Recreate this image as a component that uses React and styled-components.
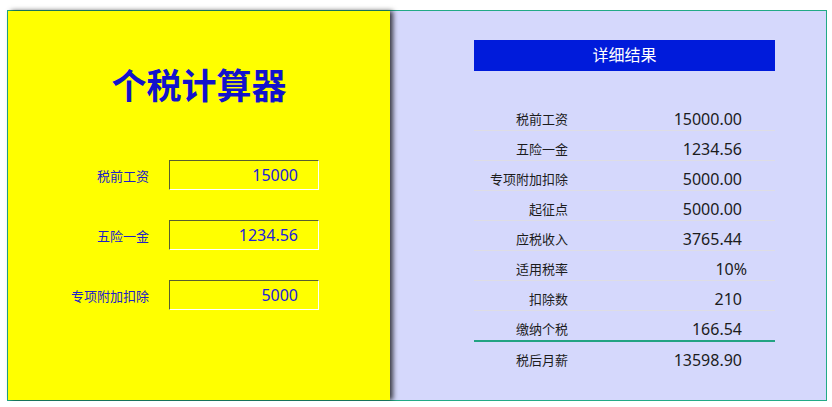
import React, { useState } from 'react'
import styled, { createGlobalStyle } from 'styled-components'

const GlobalStyle = createGlobalStyle`
  body {
    margin: 0;
    font-family: "Noto Sans", "Noto Sans CJK SC", sans-serif;
    background: #fff;
  }
`

// 个税税率表（月度）
const BRACKETS = [
  { max: 3000, rate: 3, quick: 0 },
  { max: 12000, rate: 10, quick: 210 },
  { max: 25000, rate: 20, quick: 1410 },
  { max: 35000, rate: 25, quick: 2660 },
  { max: 55000, rate: 30, quick: 4410 },
  { max: 80000, rate: 35, quick: 7160 },
  { max: Infinity, rate: 45, quick: 15160 }
]
const THRESHOLD = 5000

function calc(salary, insurance, special) {
  const s = parseFloat(salary) || 0
  const i = parseFloat(insurance) || 0
  const d = parseFloat(special) || 0
  const taxable = Math.max(0, s - i - d - THRESHOLD)
  const b = BRACKETS.find((x) => taxable <= x.max)
  const tax = Math.max(0, Math.round((taxable * b.rate / 100 - b.quick) * 100) / 100)
  return { s, i, d, taxable, rate: b.rate, quick: b.quick, tax, net: s - i - tax }
}

function App() {
  const [salary, setSalary] = useState('15000')
  const [insurance, setInsurance] = useState('1234.56')
  const [special, setSpecial] = useState('5000')
  const r = calc(salary, insurance, special)

  const rows = [
    { label: '税前工资', value: r.s.toFixed(2) },
    { label: '五险一金', value: r.i.toFixed(2) },
    { label: '专项附加扣除', value: r.d.toFixed(2) },
    { label: '起征点', value: THRESHOLD.toFixed(2) },
    { label: '应税收入', value: r.taxable.toFixed(2) },
    { label: '适用税率', value: r.rate + '%', pct: true },
    { label: '扣除数', value: String(r.quick) },
    { label: '缴纳个税', value: r.tax.toFixed(2), accent: true },
    { label: '税后月薪', value: r.net.toFixed(2), last: true }
  ]

  return (
    <>
      <GlobalStyle />
      <Frame>
        <CalcPanel>
          <Title>个税计算器</Title>
          <Form>
            <FieldLabel>税前工资</FieldLabel>
            <Field value={salary} onChange={(e) => setSalary(e.target.value)} />
            <FieldLabel>五险一金</FieldLabel>
            <Field value={insurance} onChange={(e) => setInsurance(e.target.value)} />
            <FieldLabel>专项附加扣除</FieldLabel>
            <Field value={special} onChange={(e) => setSpecial(e.target.value)} />
          </Form>
        </CalcPanel>
        <ResultPanel>
          <ResultHeader>详细结果</ResultHeader>
          <ResultTable>
            {rows.map((row) => (
              <ResultRow key={row.label} $accent={row.accent} $last={row.last}>
                <RowLabel>{row.label}</RowLabel>
                <RowValue $pct={row.pct}>{row.value}</RowValue>
              </ResultRow>
            ))}
          </ResultTable>
        </ResultPanel>
      </Frame>
    </>
  )
}

const Frame = styled.div`
  display: flex;
  box-sizing: border-box;
  width: 820px;
  height: 391px;
  margin: 10px 0 0 7px;
  border: 1px solid #22aa86;
`

const CalcPanel = styled.div`
  position: relative;
  z-index: 1;
  width: 382px;
  flex-shrink: 0;
  background: #ffff00;
  box-shadow: 3px 0 5px rgba(0, 0, 0, 0.75);
  padding-top: 50px;
  box-sizing: border-box;
`

const Title = styled.h1`
  margin: 0;
  text-align: center;
  font-size: 35px;
  line-height: 50px;
  font-weight: 700;
  color: #1212cc;
`

const Form = styled.div`
  display: grid;
  grid-template-columns: 141px 150px;
  column-gap: 20px;
  row-gap: 30px;
  align-items: center;
  margin-top: 49px;
`

const FieldLabel = styled.label`
  text-align: right;
  font-size: 13px;
  color: #2020c8;
`

const Field = styled.input`
  box-sizing: border-box;
  width: 150px;
  height: 30px;
  padding: 0 20px 0 4px;
  border: 1px solid;
  border-color: #59602e #fff #fff #59602e;
  background: transparent;
  text-align: right;
  font-family: "Noto Sans", "Noto Sans CJK SC", sans-serif;
  font-size: 16px;
  color: #2222dd;
  outline: none;
`

const ResultPanel = styled.div`
  flex: 1;
  background: #d5d8fc;
  padding: 29px 0 0 84px;
  box-sizing: border-box;
`

const ResultHeader = styled.div`
  width: 301px;
  height: 31px;
  line-height: 31px;
  background: #001bdb;
  color: #fff;
  text-align: center;
  font-size: 16px;
`

const ResultTable = styled.div`
  width: 301px;
  margin-top: 30px;
`

const ResultRow = styled.div`
  display: grid;
  grid-template-columns: 94px 1fr;
  padding-top: 7px;
  line-height: 22px;
  border-bottom: ${(p) => (p.$last ? 'none' : p.$accent ? '2px solid #22a382' : '1px solid #dedde4')};
  color: #1c1c1c;
`

const RowLabel = styled.span`
  text-align: right;
  font-size: 13px;
`

const RowValue = styled.span`
  text-align: right;
  font-size: 16px;
  padding-right: ${(p) => (p.$pct ? '28px' : '33px')};
`

export default App
